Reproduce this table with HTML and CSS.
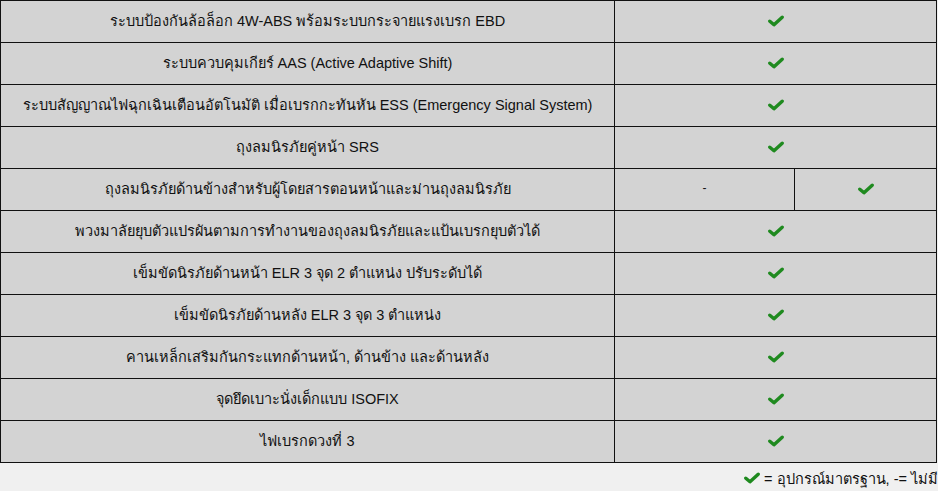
FILE: index.html
```html
<!DOCTYPE html>
<html lang="th">
<head>
<meta charset="utf-8">
<link rel="stylesheet" href="styles.css">
</head>
<body>
<table class="spec">
  <colgroup>
    <col class="c-name">
    <col class="c-a">
    <col class="c-b">
  </colgroup>
  <tbody>
    <tr><td>ระบบป้องกันล้อล็อก 4W-ABS พร้อมระบบกระจายแรงเบรก EBD</td><td colspan="2"><svg class="ok" viewBox="0 0 16 12"><path d="M1.8 6.2 L6 9.8 L14.2 2.2"/></svg></td></tr>
    <tr><td>ระบบควบคุมเกียร์ AAS (Active Adaptive Shift)</td><td colspan="2"><svg class="ok" viewBox="0 0 16 12"><path d="M1.8 6.2 L6 9.8 L14.2 2.2"/></svg></td></tr>
    <tr><td>ระบบสัญญาณไฟฉุกเฉินเตือนอัตโนมัติ เมื่อเบรกกะทันหัน ESS (Emergency Signal System)</td><td colspan="2"><svg class="ok" viewBox="0 0 16 12"><path d="M1.8 6.2 L6 9.8 L14.2 2.2"/></svg></td></tr>
    <tr><td>ถุงลมนิรภัยคู่หน้า SRS</td><td colspan="2"><svg class="ok" viewBox="0 0 16 12"><path d="M1.8 6.2 L6 9.8 L14.2 2.2"/></svg></td></tr>
    <tr><td>ถุงลมนิรภัยด้านข้างสำหรับผู้โดยสารตอนหน้าและม่านถุงลมนิรภัย</td><td class="dash">-</td><td><svg class="ok" viewBox="0 0 16 12"><path d="M1.8 6.2 L6 9.8 L14.2 2.2"/></svg></td></tr>
    <tr><td>พวงมาลัยยุบตัวแปรผันตามการทำงานของถุงลมนิรภัยและแป้นเบรกยุบตัวได้</td><td colspan="2"><svg class="ok" viewBox="0 0 16 12"><path d="M1.8 6.2 L6 9.8 L14.2 2.2"/></svg></td></tr>
    <tr><td>เข็มขัดนิรภัยด้านหน้า ELR 3 จุด 2 ตำแหน่ง ปรับระดับได้</td><td colspan="2"><svg class="ok" viewBox="0 0 16 12"><path d="M1.8 6.2 L6 9.8 L14.2 2.2"/></svg></td></tr>
    <tr><td>เข็มขัดนิรภัยด้านหลัง ELR 3 จุด 3 ตำแหน่ง</td><td colspan="2"><svg class="ok" viewBox="0 0 16 12"><path d="M1.8 6.2 L6 9.8 L14.2 2.2"/></svg></td></tr>
    <tr><td>คานเหล็กเสริมกันกระแทกด้านหน้า, ด้านข้าง และด้านหลัง</td><td colspan="2"><svg class="ok" viewBox="0 0 16 12"><path d="M1.8 6.2 L6 9.8 L14.2 2.2"/></svg></td></tr>
    <tr><td>จุดยึดเบาะนั่งเด็กแบบ ISOFIX</td><td colspan="2"><svg class="ok" viewBox="0 0 16 12"><path d="M1.8 6.2 L6 9.8 L14.2 2.2"/></svg></td></tr>
    <tr><td>ไฟเบรกดวงที่ 3</td><td colspan="2"><svg class="ok" viewBox="0 0 16 12"><path d="M1.8 6.2 L6 9.8 L14.2 2.2"/></svg></td></tr>
  </tbody>
</table>
<p class="legend"><svg class="ok big" viewBox="0 0 16 12"><path d="M1.8 6.2 L6 9.8 L14.2 2.2"/></svg> = อุปกรณ์มาตรฐาน, -= ไม่มี</p>
</body>
</html>
```

FILE: styles.css
```css
html, body {
  margin: 0;
  padding: 0;
  background: #f0f0f0;
}
body {
  font-family: "Liberation Sans", "Noto Sans", sans-serif;
  font-size: 14.5px;
  color: #111;
}
.spec {
  border-collapse: collapse;
  width: 936px;
  table-layout: fixed;
}
.c-name { width: 614px; }
.c-a { width: 180px; }
.c-b { width: 142px; }
.spec td {
  border: 1px solid #111;
  background: #d3d3d3;
  height: 38px;
  padding: 0 0 3px;
  text-align: center;
  vertical-align: middle;
}
.spec .dash {
  font-size: 12px;
}
.ok {
  width: 16px;
  height: 12px;
  display: inline-block;
  vertical-align: middle;
}
.ok path {
  fill: none;
  stroke: #1f8a1f;
  stroke-width: 3.4;
  stroke-linecap: round;
  stroke-linejoin: round;
}
.legend {
  margin: 0;
  padding-top: 7px;
  text-align: right;
  font-size: 14.5px;
  line-height: 18px;
}
.ok.big {
  width: 16px;
  height: 12px;
  vertical-align: 0;
}
```
